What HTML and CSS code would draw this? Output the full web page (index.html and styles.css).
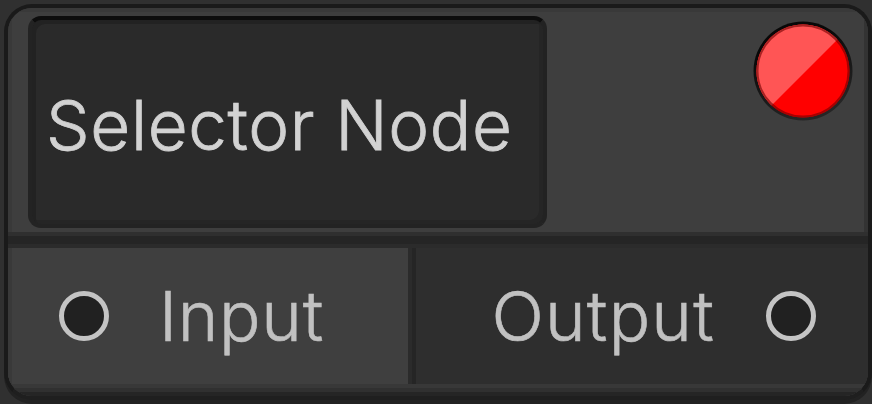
FILE: index.html
```
<!DOCTYPE html>
<html lang="en">
<head>
<meta charset="utf-8">
<title>Selector Node</title>
<link rel="stylesheet" href="styles.css">
</head>
<body>
<main class="node">
  <header class="header">
    <div class="title"><span class="title-text">Selector Node</span></div>
    <svg class="status" viewBox="0 0 104 104" aria-hidden="true">
      <defs>
        <linearGradient id="rim" x1="0" y1="0" x2="0.4" y2="1"><stop offset="0.3" stop-color="#080808"/><stop offset="1" stop-color="#252525"/></linearGradient>
        <clipPath id="disc"><circle cx="51" cy="52" r="46.5"/></clipPath>
      </defs>
      <circle cx="51" cy="52" r="49.5" fill="url(#rim)"/>
      <g clip-path="url(#disc)">
        <rect width="104" height="104" fill="#ff0000"/>
        <path d="M0 0H104L88 18L20 86L0 106Z" fill="#ff5555"/>
        <circle cx="51" cy="52" r="46" fill="none" stroke="#700000" stroke-opacity=".6" stroke-width="3"/>
      </g>
    </svg>
  </header>
  <section class="ports">
    <div class="port input">
      <span class="socket"></span>
      <span class="label label-input">Input</span>
    </div>
    <div class="port output">
      <span class="label label-output">Output</span>
      <span class="socket"></span>
    </div>
  </section>
</main>
</body>
</html>
```
FILE: styles.css
```
* { box-sizing: border-box; }
body {
  margin: 0;
  width: 872px;
  height: 404px;
  padding: 4px 0 4px 4px;
  overflow: hidden;
  background: #303030;
  font-family: Inter, "Liberation Sans", sans-serif;
  font-weight: 300;
}
.node {
  display: flex;
  flex-direction: column;
  width: 868px;
  height: 396px;
  border: 4px solid #1a1a1a;
  border-bottom-color: #1f1f1f;
  border-radius: 28px;
  background: #3e3e3e;
  overflow: hidden;
  box-shadow: 0 4px 0 #222222;
}
.header {
  display: flex;
  justify-content: space-between;
  align-items: flex-start;
  height: 224px;
  padding: 4px 12px 4px 20px;
  border-top: 4px solid #393939;
  box-shadow: inset -4px 0 0 #333333, inset 4px 0 0 #393939;
}
.title {
  display: flex;
  align-items: center;
  width: 519px;
  height: 212px;
  border: 4px solid #232323;
  border-top-color: #0d0d0d;
  border-right-color: #222222;
  border-radius: 13px;
  padding: 5px 0 0 14px;
  background: #2a2a2a;
  box-shadow: inset 4px 4px 0 #222222, inset -4px -4px 0 #252525;
  color: #d2d2d2;
}
.title-text {
  font-size: 69px;
  line-height: 84px;
  letter-spacing: 0.65px;
  white-space: nowrap;
  -webkit-text-stroke: 0.8px #d2d2d2;
}
.status { width: 104px; height: 104px; margin-top: 3px; }
.ports {
  display: grid;
  grid-template-columns: 408px 1fr;
  height: 164px;
  border-top: 4px solid #2f2f2f;
  background: #2e2e2e;
  box-shadow: inset 0 8px 0 #252525, inset 0 12px 0 #2b2b2b, inset 0 -4px 0 #252525, inset 0 -8px 0 #303030, inset 0 -12px 0 #383838;
  padding: 12px 0;
}
.port { display: flex; align-items: center; }
.input {
  padding-left: 51px;
  background: #3f3f3f;
  border-right: 4px solid #252525;
  box-shadow: inset -4px 0 0 #2b2b2b, inset 4px 0 0 #393939;
}
.output { justify-content: flex-end; padding-right: 52px; }
.socket {
  width: 50px;
  height: 50px;
  border: 5px solid #c4c4c4;
  border-radius: 50%;
  background: #212121;
}
.label {
  font-size: 69px;
  line-height: 84px;
  color: #c1c1c1;
  white-space: nowrap;
  letter-spacing: 0.7px;
  -webkit-text-stroke: 0.6px #c1c1c1;
}
.label-input { margin-left: 50px; }
.label-output { margin-right: 51px; letter-spacing: 1.2px; }
```
